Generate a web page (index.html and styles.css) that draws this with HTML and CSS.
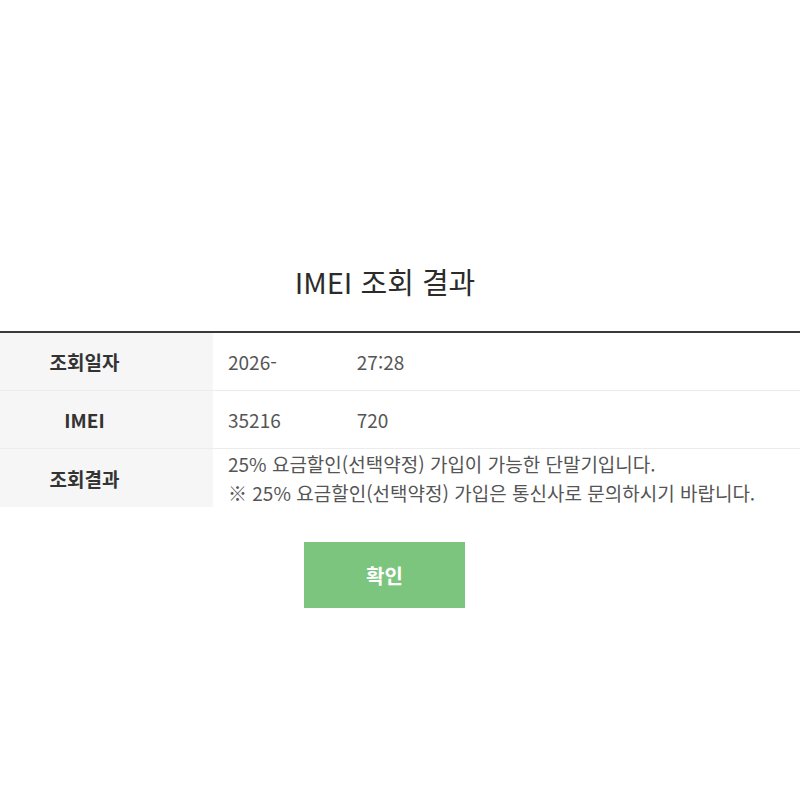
FILE: index.html
```html
<!DOCTYPE html>
<html lang="ko">
<head>
<meta charset="utf-8">
<title>IMEI 조회 결과</title>
<link rel="stylesheet" href="styles.css">
</head>
<body>
<div class="page">
  <h1 class="title">IMEI 조회 결과</h1>
  <div class="table">
    <div class="row">
      <div class="label">조회일자</div>
      <div class="value">2026-<span class="mask"></span>27:28</div>
    </div>
    <div class="row">
      <div class="label">IMEI</div>
      <div class="value">35216<span class="mask mask-b"></span>720</div>
    </div>
    <div class="row row-last">
      <div class="label">조회결과</div>
      <div class="value multi">
        <p>25% 요금할인(선택약정) 가입이 가능한 단말기입니다.</p>
        <p>※ 25% 요금할인(선택약정) 가입은 통신사로 문의하시기 바랍니다.</p>
      </div>
    </div>
  </div>
  <div class="actions">
    <button class="btn" type="button">확인</button>
  </div>
</div>
</body>
</html>
```

FILE: styles.css
```css
html, body {
  margin: 0;
  padding: 0;
  background: #ffffff;
}
body {
  font-family: "Noto Sans CJK KR", "Noto Sans", sans-serif;
  color: #333333;
}
.page {
  padding-top: 262px;
}
.title {
  margin: 0 30px 0 0;
  text-align: center;
  font-size: 29px;
  line-height: 38px;
  font-weight: 400;
  color: #2b2b2b;
}
.table {
  margin-top: 31px;
  border-top: 2px solid #3a3a3a;
}
.row {
  display: grid;
  grid-template-columns: 213px 1fr;
  height: 58px;
  border-bottom: 1px solid #ececec;
  box-sizing: border-box;
}
.row-last {
  border-bottom: 0;
}
.label {
  background: #f6f6f6;
  display: flex;
  align-items: center;
  justify-content: center;
  padding-right: 44px;
  font-size: 19px;
  font-weight: 700;
  color: #333333;
}
.value {
  display: flex;
  align-items: center;
  padding-left: 15px;
  font-size: 19px;
  color: #555555;
}
.mask {
  display: inline-block;
  width: 80px;
  height: 20px;
}
.mask-b {
  width: 76px;
}
.value.multi {
  flex-direction: column;
  align-items: flex-start;
  justify-content: center;
}
.value.multi p {
  margin: 0;
  line-height: 29px;
}
.actions {
  display: flex;
  justify-content: center;
  padding-right: 31px;
  margin-top: 35px;
}
.btn {
  width: 161px;
  height: 66px;
  border: 0;
  background: #7cc57e;
  color: #ffffff;
  font-family: inherit;
  font-size: 20px;
  font-weight: 700;
}
```
